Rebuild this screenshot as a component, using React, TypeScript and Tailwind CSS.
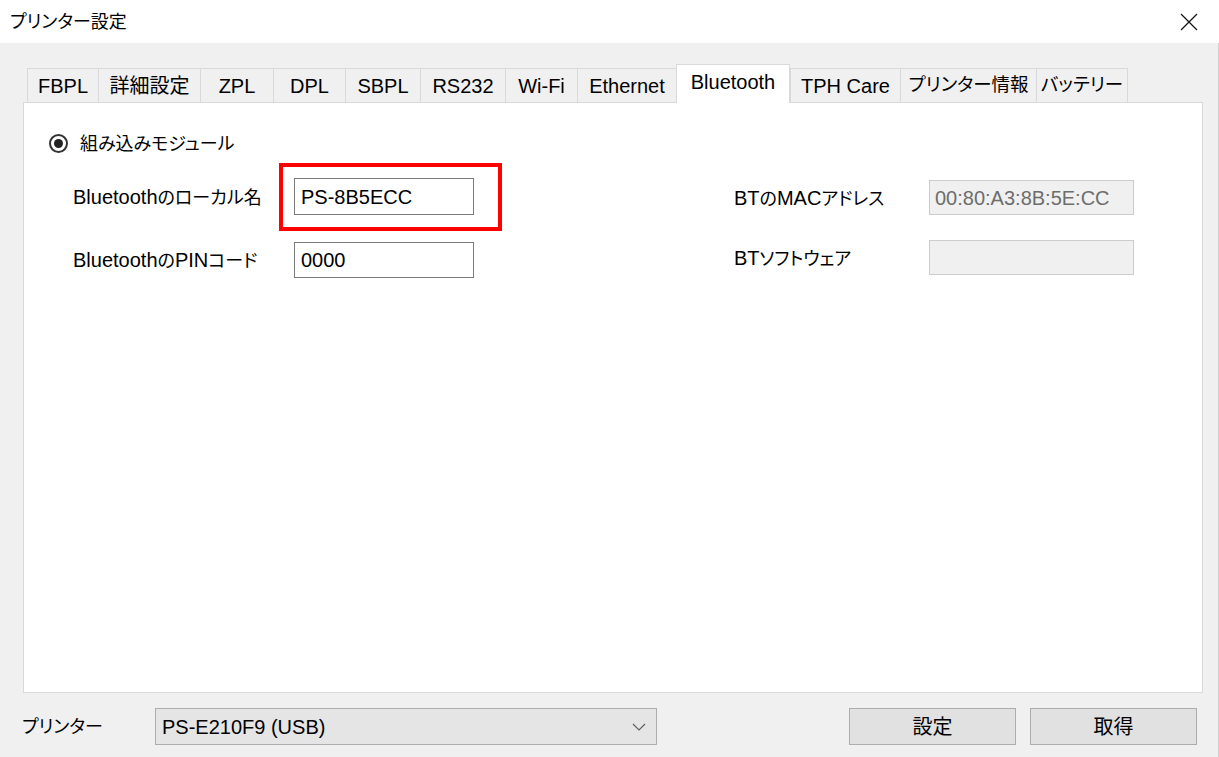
import React from "react";

const tabs: { label: string; w: string; jp?: boolean }[] = [
  { label: "FBPL", w: "w-[71px]" },
  { label: "詳細設定", w: "w-[102px]" },
  { label: "ZPL", w: "w-[73px]" },
  { label: "DPL", w: "w-[72px]" },
  { label: "SBPL", w: "w-[75px]" },
  { label: "RS232", w: "w-[85px]" },
  { label: "Wi-Fi", w: "w-[72px]" },
  { label: "Ethernet", w: "w-[99px]" },
  { label: "Bluetooth", w: "w-[114px]" },
  { label: "TPH Care", w: "w-[110px]" },
  { label: "プリンター情報", w: "w-[136px]", jp: true },
  { label: "バッテリー", w: "w-[92px]", jp: true },
];

const ACTIVE = "Bluetooth";

function CloseIcon() {
  return (
    <svg width="18" height="18" viewBox="0 0 18 18" fill="none">
      <path d="M1 1L17 17M17 1L1 17" stroke="#111" strokeWidth="1.2" />
    </svg>
  );
}

function Chevron() {
  return (
    <svg width="14" height="8" viewBox="0 0 14 8" fill="none">
      <path d="M1 1L7 7L13 1" stroke="#606060" strokeWidth="1.2" />
    </svg>
  );
}

// japanese part of a label, a touch smaller like Meiryo UI's narrow kana
function Jp({ children }: { children: React.ReactNode }) {
  return <span className="text-[18px]">{children}</span>;
}

export default function App() {
  return (
    <div className="w-[1219px] h-[757px] flex flex-col bg-[#f0f0f0] text-black text-[20px] leading-none font-['Liberation_Sans','Noto_Sans_CJK_JP',sans-serif] [font-feature-settings:'palt'] overflow-hidden">
      {/* title bar */}
      <div className="h-[43px] bg-white flex items-center justify-between pl-[10px] pr-[21px] shrink-0">
        <span className="text-[18px]">プリンター設定</span>
        <CloseIcon />
      </div>

      <div className="flex-1 flex flex-col border-r border-[#d0d0d0]">
        {/* tabs */}
        <div className="relative z-10 flex items-end h-[39px] mt-[21px] ml-[27px] -mb-px">
          {tabs.map((t) => {
            const active = t.label === ACTIVE;
            return (
              <div
                key={t.label}
                className={
                  active
                    ? `${t.w} h-[39px] bg-white border border-b-0 border-[#d9d9d9] flex items-center justify-center pb-[4px]`
                    : `${t.w} h-[35px] bg-[#f0f0f0] border-l border-t border-b border-[#d9d9d9] last:border-r flex items-center justify-center ${t.jp ? "text-[18.5px]" : ""}`
                }
              >
                {t.label}
              </div>
            );
          })}
        </div>

        {/* panel */}
        <div className="ml-[23px] w-[1180px] h-[591px] bg-white border border-[#d9d9d9] pl-[25px] pt-[31px]">
          <div className="flex items-center gap-[12px]">
            <span className="w-[19px] h-[19px] rounded-full border-2 border-[#333] flex items-center justify-center">
              <span className="w-[9px] h-[9px] rounded-full bg-[#222]" />
            </span>
            <Jp>組み込みモジュール</Jp>
          </div>

          <div className="flex items-start mt-[25px] ml-[24px]">
            <div className="grid grid-cols-[221px_180px] gap-y-[27px] items-center">
              <span>
                Bluetooth<Jp>のローカル名</Jp>
              </span>
              <div className="relative">
                <div className="h-[37px] border border-[#7a7a7a] flex items-center px-[6px]">PS-8B5ECC</div>
                <div className="absolute -left-[15px] -top-[15px] w-[223px] h-[68px] border-[4px] border-[#ff0000]" />
              </div>
              <span>
                Bluetooth<Jp>の</Jp>PIN<Jp>コード</Jp>
              </span>
              <div className="h-[36px] border border-[#7a7a7a] flex items-center px-[6px]">0000</div>
            </div>

            <div className="ml-[260px] mt-[2px] grid grid-cols-[195px_205px] gap-y-[25px] items-center">
              <span>
                BT<Jp>の</Jp>MAC<Jp>アドレス</Jp>
              </span>
              <div className="h-[35px] bg-[#f0f0f0] border border-[#cccccc] flex items-center px-[5px] text-[#6d6d6d]">
                00:80:A3:8B:5E:CC
              </div>
              <span>
                BT<Jp>ソフトウェア</Jp>
              </span>
              <div className="h-[35px] bg-[#f0f0f0] border border-[#cccccc]" />
            </div>
          </div>
        </div>

        {/* bottom bar */}
        <div className="flex items-center mt-[15px] pl-[22px]">
          <span className="w-[133px] text-[18px]">プリンター</span>
          <div className="w-[502px] h-[37px] bg-[#e5e5e5] border border-[#adadad] flex items-center justify-between pl-[6px] pr-[10px]">
            <span>PS-E210F9 (USB)</span>
            <Chevron />
          </div>
          <div className="ml-[192px] flex gap-[14px]">
            <button className="w-[167px] h-[37px] bg-[#e1e1e1] border border-[#adadad] flex items-center justify-center">
              設定
            </button>
            <button className="w-[167px] h-[37px] bg-[#e1e1e1] border border-[#adadad] flex items-center justify-center">
              取得
            </button>
          </div>
        </div>
      </div>
    </div>
  );
}
